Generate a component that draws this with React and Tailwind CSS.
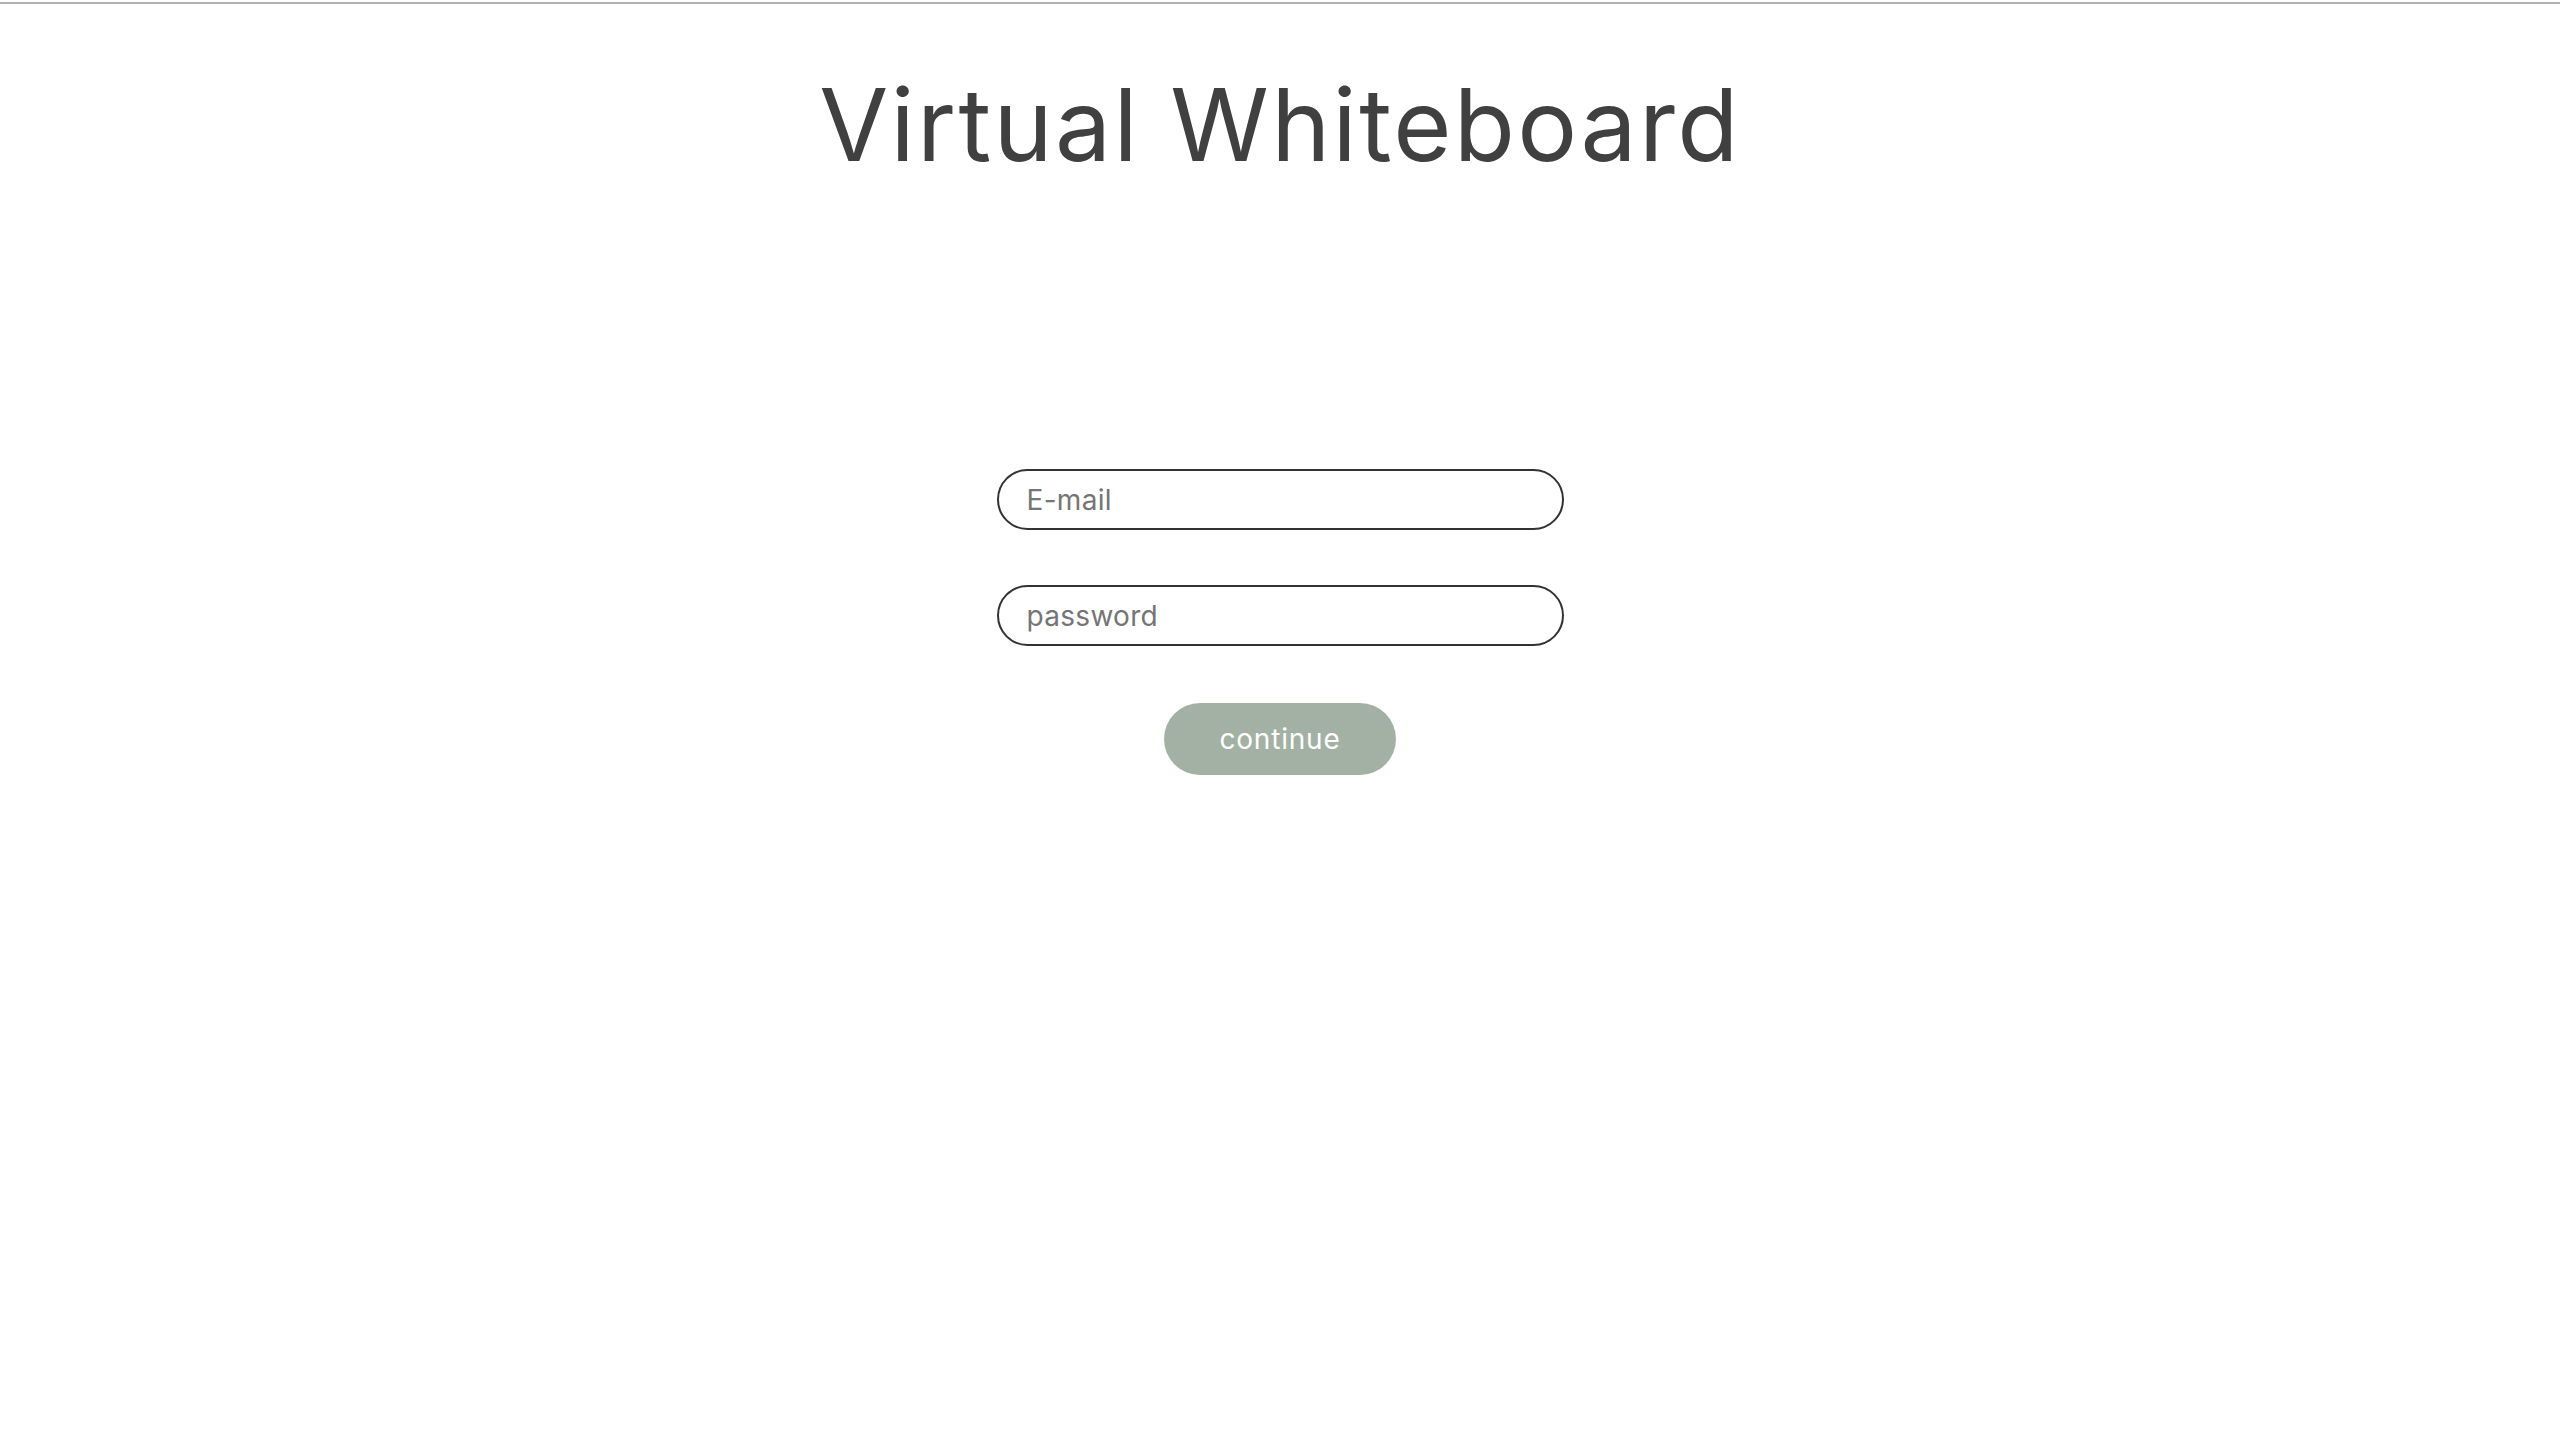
import React from 'react';

export default function App() {
  return (
    <div className="min-h-screen bg-white font-['Inter',sans-serif]">
      <div className="pt-[2px]">
        <div className="h-[2px] bg-[#b0b0b0]" />
      </div>

      <h1 className="mt-[71px] text-center text-[100px] leading-[1] font-normal tracking-[2.3px] text-[#404040]">
        Virtual Whiteboard
      </h1>

      <form className="mt-[294px] flex flex-col items-center" onSubmit={(e) => e.preventDefault()}>
        <input
          type="email"
          placeholder="E-mail"
          className="w-[567px] h-[61px] rounded-full border-2 border-[#333333] px-[28px] text-[28px] tracking-[0.3px] text-[#333] placeholder-[#757575] outline-none"
        />
        <input
          type="password"
          placeholder="password"
          className="mt-[55px] w-[567px] h-[61px] rounded-full border-2 border-[#333333] px-[28px] text-[28px] tracking-[0.3px] text-[#333] placeholder-[#757575] outline-none"
        />
        <button
          type="submit"
          className="mt-[57px] w-[232px] h-[72px] rounded-full bg-[#a3b1a4] text-[28px] tracking-[0.8px] text-white"
        >
          continue
        </button>
      </form>
    </div>
  );
}
